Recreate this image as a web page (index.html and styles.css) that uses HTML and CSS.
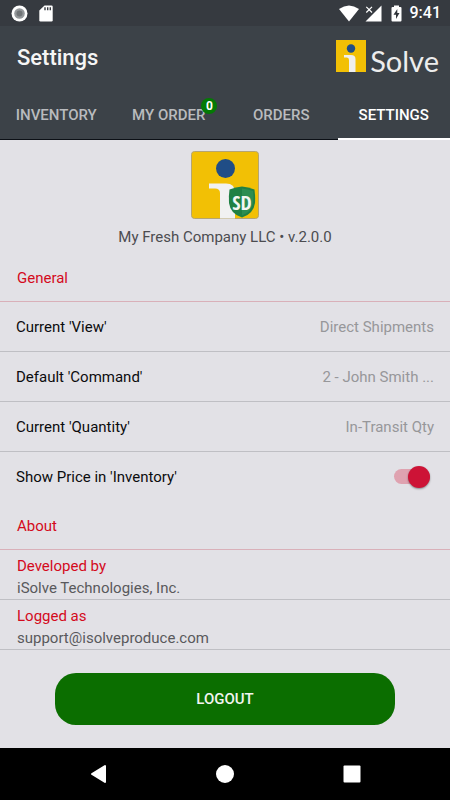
FILE: index.html
```html
<!DOCTYPE html>
<html lang="en">
<head>
<meta charset="utf-8">
<meta name="viewport" content="width=device-width, initial-scale=1">
<title>Settings</title>
<link rel="stylesheet" href="styles.css">
</head>
<body>
<div class="app">
  <div class="status-bar">
    <div class="status-group status-left">
      <svg width="17" height="17" viewBox="0 0 17 17" aria-hidden="true"><circle cx="8.5" cy="8.5" r="8" fill="#fff"/><circle cx="8.5" cy="8.5" r="5.3" fill="#94989b"/><circle cx="8.5" cy="8.5" r="3" fill="#707477"/></svg>
      <svg width="14" height="17" viewBox="0 0 14 17" aria-hidden="true"><path d="M5.5.5H12.5Q13.7.5 13.7 1.7V15.3Q13.7 16.5 12.5 16.5H1.5Q.3 16.5.3 15.3V5.5Z" fill="#fff"/><path d="M6 2.2V5.2M8.7 2.2V5.2M11.3 2.2V5.2" stroke="#363a40" stroke-width="1.4"/></svg>
    </div>
    <div class="status-group status-right">
      <svg width="20" height="17" viewBox="0 0 20 17" aria-hidden="true"><path d="M0 4Q10-3 20 4L10 16.5Z" fill="#fff"/></svg>
      <svg width="17" height="17" viewBox="0 0 17 17" aria-hidden="true"><path d="M16.500.5V16.500H.5L8 9L9 8Z" fill="#fff"/><path d="M1.300 1.800L7 7.500M7 1.800L1.300 7.500" stroke="#fff" stroke-width="1.2"/></svg>
      <svg class="battery" width="11" height="17" viewBox="0 0 11 17" aria-hidden="true"><path d="M3 .5H8V2H9.5Q10.5 2 10.5 3V15.5Q10.5 16.5 9.5 16.5H1.5Q.5 16.5.5 15.5V3Q.5 2 1.5 2H3Z" fill="#fff"/><path d="M6.3 4L2.5 9.8H5V14L8.5 8H6.3Z" fill="#30343a"/></svg>
      <span class="clock">9:41</span>
    </div>
  </div>

  <header class="header">
    <h1 class="title">Settings</h1>
    <div class="brand">
      <svg width="30" height="32" viewBox="0 0 30 32" aria-hidden="true"><path fill="#f2c005" d="M0 0H30V32H0Z"/><circle cx="15" cy="8.5" r="4.2" fill="#204d86"/><path fill="#efefef" d="M8 15H15Q19.500 15 19.500 19V32H13V20Q13 17.500 11 17.500H8Z"/></svg>
      <span class="brand-name">Solve</span>
    </div>
  </header>

  <nav class="tabs">
    <a class="tab" href="#inventory">INVENTORY</a>
    <a class="tab" href="#my-order"><span class="tab-label">MY ORDER<span class="badge">0</span></span></a>
    <a class="tab" href="#orders">ORDERS</a>
    <a class="tab tab-active" href="#settings" aria-current="page">SETTINGS</a>
  </nav>

  <main class="content">
    <div class="profile">
      <svg width="68" height="68" viewBox="0 0 68 68" aria-hidden="true"><rect x=".5" y=".5" width="67" height="67" rx="3" fill="#f2c005" stroke="#b5a571"/><circle cx="34.5" cy="17.5" r="9.5" fill="#204d86"/><path fill="#f1f1f1" d="M18 32.500H35Q44 32.500 44 41V67.500H29V42Q29 37.500 24 37.500H18Z"/><path fill="#208044" d="M51 35.500Q57 36 63.500 38.500Q64.500 45 64 52Q62.500 63 51 66.500Q39.500 63 38 52Q37.500 45 38.500 38.500Q45 36 51 35.500Z"/><path fill="#3a9a5d" d="M51 37.500Q57 38 62 40Q63 46 62 52Q60.500 61 51 64.500Z" opacity=".5"/><text class="shield-text" x="51" y="59" text-anchor="middle">SD</text></svg>
      <p class="company">My Fresh Company LLC • v.2.0.0</p>
    </div>

    <section>
      <h2 class="section-title">General</h2>
      <button class="row" type="button"><span>Current 'View'</span><span class="value">Direct Shipments</span></button>
      <button class="row" type="button"><span>Default 'Command'</span><span class="value">2 - John Smith ...</span></button>
      <button class="row" type="button"><span>Current 'Quantity'</span><span class="value">In-Transit Qty</span></button>
      <div class="row row-last">
        <label for="show-price">Show Price in 'Inventory'</label>
        <input class="switch" id="show-price" type="checkbox" role="switch" checked>
      </div>
    </section>

    <section>
      <h2 class="section-title">About</h2>
      <dl class="about">
        <div class="about-item"><dt>Developed by</dt><dd>iSolve Technologies, Inc.</dd></div>
        <div class="about-item"><dt>Logged as</dt><dd>support@isolveproduce.com</dd></div>
      </dl>
    </section>

    <button class="logout" type="button">LOGOUT</button>
  </main>

  <div class="system-nav">
    <button class="nav-button" type="button" aria-label="Back"><svg width="18" height="20" viewBox="0 0 18 20"><path d="M16 2V18L3 10Z" fill="#fff" stroke="#fff" stroke-width="2" stroke-linejoin="round"/></svg></button>
    <button class="nav-button" type="button" aria-label="Home"><svg width="18" height="18" viewBox="0 0 18 18"><circle cx="9" cy="9" r="9" fill="#fff"/></svg></button>
    <button class="nav-button" type="button" aria-label="Recent apps"><svg width="18" height="18" viewBox="0 0 18 18"><rect x=".5" y=".5" width="17" height="17" rx="1" fill="#fff"/></svg></button>
  </div>
</div>
</body>
</html>
```
FILE: styles.css
```css
* {
  box-sizing: border-box;
}

body {
  margin: 0;
  background: #e2e1e6;
  color: #0c0c0e;
  font: 15px/20px Roboto, "Liberation Sans", sans-serif;
}

h1, h2, p, dl, dd {
  margin: 0;
}

button {
  border: 0;
  color: inherit;
  font: inherit;
}

svg {
  display: block;
  flex: none;
}

.app {
  display: flex;
  flex-direction: column;
  min-height: 100vh;
}

.status-bar {
  display: flex;
  align-items: center;
  justify-content: space-between;
  height: 26px;
  padding: 0 9px 0 11px;
  background: #363a40;
}

.status-group {
  display: flex;
  align-items: center;
}

.status-left {
  gap: 11px;
}

.status-right {
  gap: 6px;
}

.battery {
  margin: 0 2px 0 3px;
}

.clock {
  color: #fff;
  font-size: 16px;
  font-weight: 500;
}

.header {
  display: flex;
  align-items: center;
  justify-content: space-between;
  height: 64px;
  padding: 0 11px 0 17px;
  background: #3c4248;
}

.title {
  color: #f5f5f5;
  font-size: 22px;
  line-height: 28px;
  font-weight: 500;
}

.brand {
  display: flex;
  align-items: center;
  gap: 4px;
  padding-bottom: 4px;
}

.brand-name {
  padding-top: 10px;
  color: #ededed;
  font-family: Lato, sans-serif;
  font-size: 29px;
  line-height: 30px;
}

.tabs {
  display: grid;
  grid-template-columns: repeat(4, 1fr);
  height: 50px;
  background: #3c4248;
}

.tab {
  display: flex;
  align-items: center;
  justify-content: center;
  padding-top: 1px;
  border-bottom: 1px solid #0c1016;
  color: #b9bbbe;
  font-weight: 500;
  text-decoration: none;
  white-space: nowrap;
}

.tab-active {
  padding-top: 2px;
  border-bottom: 2px solid #fff;
  color: #fff;
}

.tab-label {
  position: relative;
}

.badge {
  position: absolute;
  top: -7px;
  right: -12px;
  width: 16px;
  height: 16px;
  border-radius: 50%;
  background: #047a04;
  color: #fff;
  font-size: 12px;
  line-height: 16px;
  font-weight: 700;
  text-align: center;
}

.content {
  display: flex;
  flex: 1;
  flex-direction: column;
}

.profile {
  display: flex;
  flex-direction: column;
  align-items: center;
  gap: 8px;
  padding: 11px 16px 6px;
}

.shield-text {
  fill: #f3f6f3;
  font: 700 20px "Open Sans Condensed", Roboto, sans-serif;
}

.company {
  color: #4c4c50;
}

.section-title {
  height: 49px;
  padding: 15px 17px;
  border-bottom: 1px solid #d9b0b9;
  color: #d40a1c;
  font-size: 15px;
  font-weight: 400;
}

.row {
  display: flex;
  align-items: center;
  justify-content: space-between;
  width: 100%;
  height: 50px;
  padding: 0 16px;
  border-bottom: 1px solid #bfbfc4;
  background: none;
  text-align: left;
}

.row-last {
  height: 49px;
  border-bottom: 0;
}

.value {
  color: #97979a;
}

.switch {
  display: flex;
  align-items: center;
  justify-content: flex-end;
  width: 36px;
  height: 15px;
  margin: 0 4px 0 0;
  border-radius: 8px;
  background: #dfa2b0;
  appearance: none;
}

.switch::before {
  width: 22px;
  height: 22px;
  flex: none;
  border-radius: 50%;
  background: #cd1336;
  box-shadow: 0 1px 2px #0006;
  content: "";
}

.about-item {
  padding: 5px 17px 0;
  border-bottom: 1px solid #bfbfc4;
  line-height: 22px;
}

.about-item dt {
  color: #d40a1c;
}

.about-item dd {
  color: #59595c;
}

.logout {
  height: 52px;
  margin: 23px 55px 22px;
  border-radius: 21px;
  background: #0b6e00;
  color: #f2f5f1;
  font-weight: 500;
}

.system-nav {
  display: flex;
  align-items: center;
  justify-content: center;
  gap: 91px;
  height: 52px;
  background: #000;
}

.nav-button {
  display: flex;
  align-items: center;
  justify-content: center;
  width: 36px;
  height: 36px;
  padding: 0;
  background: none;
}
```
